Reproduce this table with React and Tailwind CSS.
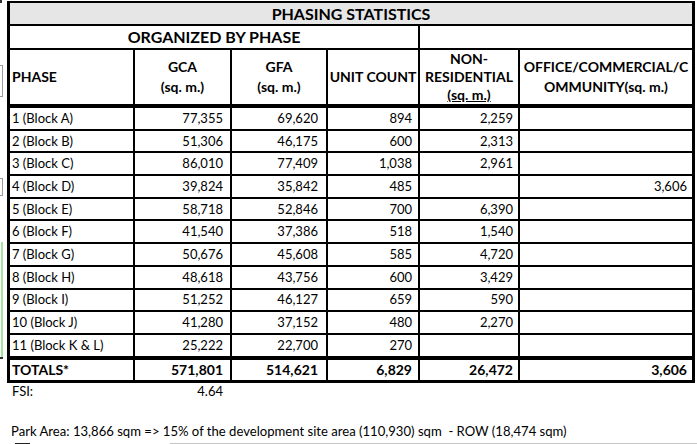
import React from 'react';

const rows = [
  ['1 (Block A)', '77,355', '69,620', '894', '2,259', ''],
  ['2 (Block B)', '51,306', '46,175', '600', '2,313', ''],
  ['3 (Block C)', '86,010', '77,409', '1,038', '2,961', ''],
  ['4 (Block D)', '39,824', '35,842', '485', '', '3,606'],
  ['5 (Block E)', '58,718', '52,846', '700', '6,390', ''],
  ['6 (Block F)', '41,540', '37,386', '518', '1,540', ''],
  ['7 (Block G)', '50,676', '45,608', '585', '4,720', ''],
  ['8 (Block H)', '48,618', '43,756', '600', '3,429', ''],
  ['9 (Block I)', '51,252', '46,127', '659', '590', ''],
  ['10 (Block J)', '41,280', '37,152', '480', '2,270', ''],
  ['11 (Block K & L)', '25,222', '22,700', '270', '', ''],
];

// celdas de una fila de datos (ancho + padding derecho por columna)
const DataRow = ({ cells, last, bold }) => (
  <div className={`flex ${last ? 'h-[24.7px] border-b-4' : bold ? 'h-[20px] text-[14px]' : 'h-[22.7px] border-b-2'} border-black ${bold ? 'font-bold' : ''}`}>
    <div className="w-[125px] shrink-0 border-r-2 border-black pl-[2px] flex items-center whitespace-nowrap">{cells[0]}</div>
    <div className="w-[97px] shrink-0 border-r-2 border-black pr-[7px] flex items-center justify-end">{cells[1]}</div>
    <div className="w-[96px] shrink-0 border-r-2 border-black pr-[8px] flex items-center justify-end">{cells[2]}</div>
    <div className="w-[92px] shrink-0 border-r-2 border-black pr-[6px] flex items-center justify-end">{cells[3]}</div>
    <div className="w-[100px] shrink-0 border-r-2 border-black pr-[5px] flex items-center justify-end">{cells[4]}</div>
    <div className="flex-1 pr-[5px] flex items-center justify-end">{cells[5]}</div>
  </div>
);

export default function App() {
  return (
    <div className="relative w-[697px] h-[444px] overflow-hidden bg-white text-black text-[13px] leading-none" style={{ fontFamily: 'Lato, "Open Sans", sans-serif' }}>
      {/* restos de otra ventana en el borde izquierdo */}
      <div className="absolute left-0 top-0 w-[2px] h-[3px] bg-[#333]" />
      <div className="absolute left-0 top-[65px] w-[3px] h-[32px] border-t border-b border-r border-[#9a9a9a]" />
      <div className="absolute left-0 top-[178px] w-[3px] h-[18px] border-t border-b border-r border-[#9a9a9a]" />
      <div className="absolute left-[1px] top-[242px] w-[2px] h-[116px] bg-[#a6e3a1]" />
      <div className="absolute left-0 top-[357px] w-[3px] h-[2px] bg-[#333]" />

      <div className="ml-[7px] mt-[1px] w-[688px] border-[3px] border-t-2 border-black">
        <div className="h-[23px] border-b-2 border-black bg-[#e6e6e6] flex items-center justify-center font-bold text-[16px]">
          PHASING STATISTICS
        </div>
        <div className="flex h-[23.5px] border-b-2 border-black font-bold text-[16px]">
          <div className="w-[410px] shrink-0 border-r-2 border-black flex items-center justify-center">ORGANIZED BY PHASE</div>
          <div className="flex-1" />
        </div>
        <div className="flex h-[58.5px] border-b-4 border-black font-bold text-[14px] leading-[20px]">
          <div className="w-[125px] shrink-0 border-r-2 border-black pl-[2px] flex items-center">PHASE</div>
          <div className="w-[97px] shrink-0 border-r-2 border-black flex flex-col items-center justify-center">
            <span>GCA</span>
            <span>(sq. m.)</span>
          </div>
          <div className="w-[96px] shrink-0 border-r-2 border-black flex flex-col items-center justify-center">
            <span>GFA</span>
            <span>(sq. m.)</span>
          </div>
          <div className="w-[92px] shrink-0 border-r-2 border-black flex items-center justify-center whitespace-nowrap">UNIT COUNT</div>
          <div className="w-[100px] shrink-0 border-r-2 border-black flex flex-col items-center justify-center leading-[18px]">
            <span>NON-</span>
            <span>RESIDENTIAL</span>
            <span className="underline">(sq. m.)</span>
          </div>
          <div className="flex-1 flex flex-col items-center justify-center">
            <span>OFFICE/COMMERCIAL/C</span>
            <span>OMMUNITY(sq. m.)</span>
          </div>
        </div>
        {rows.map((r, i) => (
          <DataRow key={i} cells={r} last={i === rows.length - 1} />
        ))}
        <DataRow cells={['TOTALS*', '571,801', '514,621', '6,829', '26,472', '3,606']} bold />
      </div>

      <div className="ml-[10px] flex h-[18px] items-center">
        <div className="w-[125px] pl-[2px]">FSI:</div>
        <div className="w-[97px] pr-[9px] text-right">4.64</div>
      </div>
      <div className="h-[21px]" />
      <div className="h-[20px] pl-[11px] flex items-center whitespace-nowrap text-[13.1px]">
        Park Area: 13,866 sqm =&gt; 15% of the development site area (110,930) sqm&nbsp; - ROW (18,474 sqm)
      </div>
      <div className="flex items-end h-[3px]">
        <div className="ml-[15px] w-[15px] h-[2px] bg-[#222]" />
        <div className="ml-[140px] flex-1 h-[2px] bg-[#c4c4c4]" />
      </div>
    </div>
  );
}
